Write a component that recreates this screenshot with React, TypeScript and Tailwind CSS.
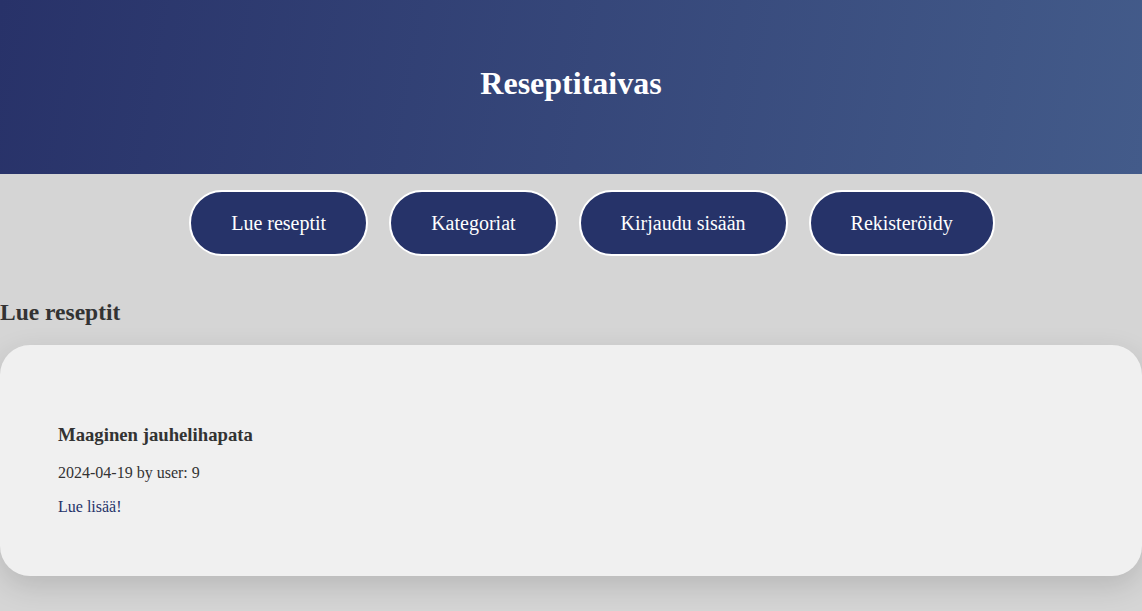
import React from "react";

export default function App() {
  const serif = { fontFamily: '"Liberation Serif", "Times New Roman", serif' };
  const items = ["Lue reseptit", "Kategoriat", "Kirjaudu sisään", "Rekisteröidy"];
  return (
    <div className="min-h-[611px] w-[1142px] overflow-hidden bg-[#d5d5d5] text-[#333333]" style={serif}>
      <header className="flex h-[174px] items-center justify-center bg-[linear-gradient(100deg,#283269,#435b8a)] pb-[8px]">
        <h1 className="text-[32px] font-bold leading-none text-white">Reseptitaivas</h1>
      </header>
      <nav className="mt-[16px]">
        <ul className="flex justify-center gap-[21px] pl-[42px]">
          {items.map((t) => (
            <li key={t}>
              <a className="flex h-[66px] items-center rounded-full border-2 border-white bg-[#263369] px-[40px] text-[20px] text-white">
                {t}
              </a>
            </li>
          ))}
        </ul>
      </nav>
      <h2 className="mt-[43px] text-[23.5px] font-bold leading-[27px]">Lue reseptit</h2>
      <section className="mt-[19px] h-[231px] rounded-[30px] bg-[#f0f0f0] pl-[58px] pt-[79px] shadow-[0_10px_30px_rgba(0,0,0,0.14)]">
        <h3 className="text-[18.72px] font-bold leading-[22px]">Maaginen jauhelihapata</h3>
        <p className="mt-[18px] text-[16px] leading-[18px]">2024-04-19 by user: 9</p>
        <a className="mt-[16px] block text-[16px] leading-[18px] text-[#263369]">Lue lisää!</a>
      </section>
    </div>
  );
}
